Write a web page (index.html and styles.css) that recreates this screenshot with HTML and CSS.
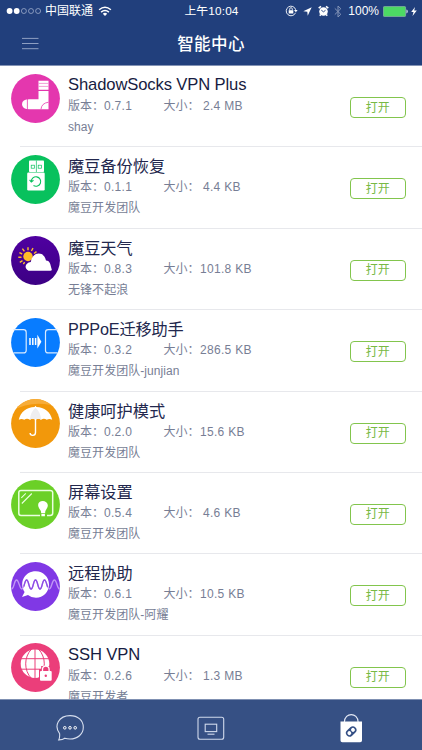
FILE: index.html
```html
<!DOCTYPE html>
<html lang="zh-CN">
<head>
<meta charset="utf-8">
<title>智能中心</title>
<link rel="stylesheet" href="styles.css">
</head>
<body>
<div class="screen">
  <header class="header">
    <div class="status">
      <div class="carrier">
        <svg class="signal" width="36" height="8" viewBox="0 0 36 8"><g fill="#fff"><circle cx="3.6" cy="4" r="2.9"/><circle cx="10.7" cy="4" r="2.9"/></g><g fill="none" stroke="#c3cde2" stroke-width=".6"><circle cx="17.9" cy="4" r="2.5"/><circle cx="25" cy="4" r="2.5"/><circle cx="32.1" cy="4" r="2.5"/></g></svg>
        <span>中国联通</span>
        <svg class="wifi" width="14" height="11" viewBox="0 0 14 11"><path d="M1.1 3.8Q7-1.2 12.9 3.8M3.1 6.1Q7 2.9 10.9 6.1" fill="none" stroke="#fff" stroke-width="1.5"/><path d="M4.8 7.7Q7 6 9.2 7.7L7 10z" fill="#fff"/></svg>
      </div>
      <div class="time">上午10:04</div>
      <div class="indicators">
        <svg width="13" height="12" viewBox="0 0 13 12"><path d="M10.5 7.8A4.8 4.8 0 1 1 10.7 4.8" fill="none" stroke="#fff" stroke-width=".9"/><path d="M9 5h3.6l-1.7 2.2z" fill="#fff"/><rect x="3.7" y="5.2" width="4.6" height="3.3" fill="#fff"/><path d="M4.7 5V4a1.3 1.3 0 0 1 2.6 0v1" fill="none" stroke="#fff" stroke-width=".8"/></svg>
        <svg class="arrow" width="9" height="9" viewBox="0 0 9 9"><path d="M8.7.3L.3 4.3l4 .4.4 4z" fill="#fff"/></svg>
        <svg class="alarm" width="11" height="12" viewBox="0 0 11 12"><circle cx="5.5" cy="6.5" r="4.3" fill="#fff"/><path d="M.7 3.2L3 1.3M10.3 3.2L8 1.3M2.7 9.5L1.8 10.700M8.3 9.5L9.200 10.700" stroke="#fff" stroke-width="1.5"/><path d="M3.3 5.2l2.2 1.6 2-1.5" fill="none" stroke="#213f7c" stroke-width=".9"/></svg>
        <svg class="bluetooth" width="8" height="13" viewBox="0 0 8 13"><path d="M.8 3.4l6 5.9L4 12V1l2.8 2.7-6 5.9" fill="none" stroke="#8495b8" stroke-width="1"/></svg>
        <span class="percent">100%</span>
        <svg class="battery" width="25" height="11" viewBox="0 0 25 11"><rect x=".4" y=".4" width="22.2" height="10.2" rx="1.2" fill="#4cd964" stroke="#91b7a9" stroke-width=".7"/><path d="M23.3 3.6q1.6.2 1.6 1.9t-1.6 1.9z" fill="#b9c5dc"/></svg>
        <svg class="bolt" width="6" height="9" viewBox="0 0 6 9"><path d="M4 0L.2 5h2.3L1.5 9l4.3-5.4H3.2z" fill="#fff"/></svg>
      </div>
    </div>
    <nav class="navbar">
      <svg class="menu" width="17" height="13" viewBox="0 0 17 13"><path d="M0 1.4h16.5M0 6.5h16.5M0 11.7h16.5" stroke="#8e9fc2" stroke-width="1"/></svg>
      <h1>智能中心</h1>
    </nav>
  </header>

  <main class="list">
    <article class="row">
      <svg class="icon" viewBox="0 0 49 49"><circle cx="24.5" cy="24.5" r="24.4" fill="#e437ae"/><path d="M27.5 6.8h10v9h-10zM27.5 17h10v18.2h-19q-7.5 0-7.5-5t7.5-5h9z" fill="#fff"/><path d="M27.5 9.4h10M27.5 12.4h10" stroke="#ef83ca" stroke-width=".8"/><path d="M16.4 25v10.3M30 35.2q.5-6 7.5-7" fill="none" stroke="#e437ae" stroke-width=".8"/></svg>
      <div class="info"><h2 class="latin">ShadowSocks VPN Plus</h2><div class="meta"><span>版本：</span><b>0.7.1</b><span>大小：</span><b class="short">2.4 MB</b></div><p>shay</p></div>
      <button>打开</button>
    </article>
    <article class="row">
      <svg class="icon" viewBox="0 0 49 49"><circle cx="24.5" cy="24.5" r="24.4" fill="#08c15d"/><rect x="18" y="5.5" width="15" height="11.5" rx=".8" fill="#fff"/><rect x="16.2" y="17.5" width="17.5" height="18" rx="1.2" fill="#fff"/><g fill="none" stroke="#08c15d" stroke-width=".7"><rect x="20.2" y="10.2" width="3.2" height="3"/><rect x="27.2" y="10.2" width="3.2" height="3"/><path d="M25.4 5.5V17"/></g><path d="M20.300 26.600A4.700 4.700 0 1 1 22.500 30.500M18.600 24.800l1.700 2.200 2.200-1.700" fill="none" stroke="#08c15d" stroke-width="1.1"/></svg>
      <div class="info"><h2>魔豆备份恢复</h2><div class="meta"><span>版本：</span><b>0.1.1</b><span>大小：</span><b class="short">4.4 KB</b></div><p>魔豆开发团队</p></div>
      <button>打开</button>
    </article>
    <article class="row">
      <svg class="icon" viewBox="0 0 49 49"><defs><linearGradient id="night" x2="0" y2="1"><stop stop-color="#4f00a0"/><stop offset="1" stop-color="#3c0084"/></linearGradient></defs><circle cx="24.5" cy="24.5" r="24.4" fill="url(#night)"/><circle cx="17" cy="20.5" r="4.7" fill="#ffbd27"/><path d="M17 14.3v-3M20.4 15l1.6-2.8M23 17.5l2.5-1.9M13.4 15.3l-2-2.7M11.2 18l-2.8-1.4M10.5 21.3H7.3M11.5 24.6l-2.7 1.7M13.6 26.1l-1.2 2" stroke="#ffbd27" stroke-width="1.4"/><path d="M17.5 34.7c-5.5-2.7-2.3-8.5 2.3-8.8 1.2-10.2 13.2-11.5 15.2-1.4 4.4.3 4.3 4.2 5.7 8.7q.5 1.5-1.4 1.5z" fill="#fff"/></svg>
      <div class="info"><h2>魔豆天气</h2><div class="meta"><span>版本：</span><b>0.8.3</b><span>大小：</span><b>101.8 KB</b></div><p>无锋不起浪</p></div>
      <button>打开</button>
    </article>
    <article class="row">
      <svg class="icon" viewBox="0 0 49 49"><circle cx="24.5" cy="24.5" r="24.4" fill="#087cff"/><g fill="none" stroke="#d8eaff" stroke-width="1.200"><path d="M2.5 11.7h10q2.7 0 2.7 2.7v18q0 2.5-2.7 2.5h-10M46.5 11.7h-9.3q-2.7 0-2.7 2.7v18q0 2.5 2.7 2.5h9.3"/></g><path d="M19 20v7M21.8 20v7M24.6 20v7" stroke="#fff" stroke-width="1.5"/><path d="M26.4 20v-3.2l4 6.9-4 6.8V27z" fill="#fff"/></svg>
      <div class="info"><h2 class="mixed">PPPoE迁移助手</h2><div class="meta"><span>版本：</span><b>0.3.2</b><span>大小：</span><b>286.5 KB</b></div><p>魔豆开发团队-junjian</p></div>
      <button>打开</button>
    </article>
    <article class="row">
      <svg class="icon" viewBox="0 0 49 49"><defs><clipPath id="disc"><circle cx="24.5" cy="24.5" r="24.4"/></clipPath></defs><circle cx="24.5" cy="24.5" r="24.4" fill="#f2980b"/><path clip-path="url(#disc)" d="M0 0h49v9q-24-10-49 3z" fill="#f7ad3a"/><path d="M7.8 20.7C9.3 12.8 16 8.2 23.5 8l1-1.2 1 1.2c7.5.2 14.2 4.8 15.7 12.7q-2.9-1.6-5.5 0-2.9-2-5.6.1-2.8-2-5.6 0-2.8-2-5.6 0-2.8-2.1-5.6-.1-2.7-1.6-5.5 0z" fill="#fff"/><path d="M18.9 20.7q.5-7.8 5.6-12 5.1 4.2 5.6 12-2.8-1.9-5.6 0-2.8-1.9-5.6 0z" fill="#eeeef0"/><path d="M24.5 20v13.6q0 2.8-2.7 2.8t-2.7-2.3" fill="none" stroke="#fff" stroke-width="1.4"/></svg>
      <div class="info"><h2>健康呵护模式</h2><div class="meta"><span>版本：</span><b>0.2.0</b><span>大小：</span><b>15.6 KB</b></div><p>魔豆开发团队</p></div>
      <button>打开</button>
    </article>
    <article class="row">
      <svg class="icon" viewBox="0 0 49 49"><circle cx="24.5" cy="24.5" r="24.4" fill="#6bd027"/><path d="M29 35.5H10q-2.2 0-2.2-2.2V12.6q0-2.2 2.2-2.2h29q2.7 0 2.7 2.2v20.7q0 2.2-2.7 2.2h-3" fill="none" stroke="#eaffdf" stroke-width="1.5"/><path d="M10.3 17.8l4.5-4.5M10.8 23.5l10-10" stroke="#eaffdf" stroke-width="1.1"/><path d="M30.2 33.2q0-2.7-2-4.8c-3.8-6.2 3.2-9.2 7-6.2 2.1 1.7 2 4.3.6 6.4q-1.6 2-1.7 4.6zM30.4 34h3.5v2.3h-3.5z" fill="#fff"/></svg>
      <div class="info"><h2>屏幕设置</h2><div class="meta"><span>版本：</span><b>0.5.4</b><span>大小：</span><b class="short">4.6 KB</b></div><p>魔豆开发团队</p></div>
      <button>打开</button>
    </article>
    <article class="row">
      <svg class="icon" viewBox="0 0 49 49"><circle cx="24.5" cy="24.5" r="24.4" fill="#8038e5"/><path d="M17 32.9l-6 2.1 2.6-5C7.5 20 14 9.2 24.8 9.2c7.5 0 13.2 6 13.2 13.2S32.2 35.8 25 35.8q-4.4 0-8-2.9z" fill="#fff"/><path d="M.7 27C3.5 26 3 18 5.5 18s3 9 5.3 9 2.6-9 4.8-9 2.3 9 4.5 9 2.2-9 4.4-9 2.3 9 4.5 9 2.3-9 4.5-9 2.5 9 4.8 9 2.7-9 5.1-9 2.5 8 5 9" fill="none" stroke="#c197f5" stroke-width="1.4"/><path d="M12.800 24.500c1-3 1.500-6.500 2.800-6.500 2.2 0 2.3 9 4.5 9s2.2-9 4.4-9 2.3 9 4.5 9 2.3-9 4.5-9c1.500 0 2 4 3.100 7" fill="none" stroke="#8d4ce4" stroke-width="1.3"/></svg>
      <div class="info"><h2>远程协助</h2><div class="meta"><span>版本：</span><b>0.6.1</b><span>大小：</span><b>10.5 KB</b></div><p>魔豆开发团队-阿耀</p></div>
      <button>打开</button>
    </article>
    <article class="row">
      <svg class="icon" viewBox="0 0 49 49"><circle cx="24.5" cy="24.5" r="24.4" fill="#eb3e7a"/><ellipse cx="24" cy="20.8" rx="14.3" ry="14.2" fill="#fff"/><g fill="none" stroke="#eb3e7a" stroke-width="1"><path d="M24 6v30M9 15.7h30M9 26.2h30M20.4 6.2c-7.6 8-7.6 21.3 0 29.2M27.6 6.2c7.6 8 7.6 21.3 0 29.2"/></g><path d="M28 26h2.2v-3h8.5v3H42v14H28z" fill="#eb3e7a"/><rect x="29" y="28" width="11.7" height="9.7" rx="1" fill="#fff"/><path d="M31.5 28v-1.6a3.3 3.3 0 0 1 6.6 0V28" fill="none" stroke="#fff" stroke-width="1.3"/><circle cx="34.8" cy="32.7" r="1.2" fill="#eb3e7a"/></svg>
      <div class="info"><h2 class="latin">SSH VPN</h2><div class="meta"><span>版本：</span><b>0.2.6</b><span>大小：</span><b class="short">1.3 MB</b></div><p>魔豆开发者</p></div>
      <button>打开</button>
    </article>
  </main>

  <footer class="tabs">
    <svg width="30" height="28" viewBox="0 0 30 28"><path d="M4.6 19.6C-1.5 11.5 4 1.6 15 1.6c8 0 13.3 5 13.3 11.7C28.3 20.2 22.5 25 15 25q-2.9 0-5.2-.8-2.4 1.8-6.1 1.7 1.3-2.4.9-6.3z" fill="none" stroke="#d7dfef" stroke-width="1.1"/><g fill="none" stroke="#fff" stroke-width="1"><circle cx="9.8" cy="13.8" r="1.3"/><circle cx="15" cy="13.8" r="1.3"/><circle cx="20.2" cy="13.8" r="1.3"/></g></svg>
    <svg width="30" height="28" viewBox="0 0 30 28"><g fill="none" stroke="#d0d9ec" stroke-width="1.1"><rect x="2" y="3.2" width="25.7" height="22" rx="2"/><rect x="9.2" y="10.2" width="11.5" height="7.4"/><path d="M11.5 20.2h7"/></g></svg>
    <svg width="30" height="30" viewBox="0 0 30 30"><path d="M7.4 9C7.7-.9 20.8-.9 21.1 9" fill="none" stroke="#e4e9f5" stroke-width="1.2"/><path d="M3.500 8.6h21.500v18.9q0 1.8-1.8 1.8H5.300q-1.800 0-1.800-1.800z" fill="#fff"/><g transform="rotate(-42 14.200 18.500)"><rect x="8.400" y="14.800" width="11.600" height="7.400" rx="3.700" fill="#344f85"/><rect x="9.900" y="16.500" width="3.700" height="3.900" rx="1.800" fill="#fff"/><rect x="14.800" y="16.500" width="3.700" height="3.900" rx="1.800" fill="#fff"/></g></svg>
  </footer>
</div>
</body>
</html>
```
FILE: styles.css
```css
* { box-sizing: border-box; }
body { margin: 0; font-family: "Liberation Sans", "Noto Sans CJK SC", sans-serif; }
h1, h2, p { margin: 0; font-weight: 400; }
svg { display: block; flex: none; }

.screen { width: 422px; height: 750px; display: flex; flex-direction: column; overflow: hidden; background: #fff; }

.header { flex: none; height: 66px; background: #213f7c; border-bottom: 1px solid #8393b5; color: #fff; }
.status { height: 22px; display: grid; grid-template-columns: 1fr auto 1fr; align-items: center; padding: 0 5px 0 6px; font-size: 12px; line-height: 22px; }
.carrier { display: flex; align-items: center; }
.carrier span { margin-left: 3px; }
.wifi { margin-left: 5px; }
.time { font-size: 11.800px; letter-spacing: .15px; }
.indicators { display: flex; align-items: center; justify-content: flex-end; }
.arrow { margin-left: 5px; }
.alarm { margin-left: 6px; }
.bluetooth { margin-left: 5px; }
.percent { margin-left: 6px; }
.battery { margin-left: 4px; }
.bolt { margin-left: 3px; }

.navbar { height: 43px; display: grid; grid-template-columns: 1fr auto 1fr; align-items: center; padding: 0 22px; }
.navbar h1 { font-size: 16.5px; line-height: 42px; font-weight: 500; letter-spacing: .4px; }

.list { flex: 1; min-height: 0; overflow: hidden; }
.row { height: 81.4px; display: grid; grid-template-columns: 49px 1fr 56px; column-gap: 8.5px; padding: 0 16px 0 10.5px; background: linear-gradient(#e7e8ec, #e7e8ec) 20px 100% / 100% 1px no-repeat; }
.icon { width: 49px; height: 49px; margin-top: 7.5px; }
.info { color: #777e95; }
.info h2 { margin-top: 8px; height: 22px; font-size: 16.2px; line-height: 22px; color: #22274d; white-space: nowrap; }
.info .latin { font-size: 16.6px; letter-spacing: -.12px; color: #171c42; }
.info .mixed { letter-spacing: -.15px; }
.meta { display: grid; grid-template-columns: 36px 59.5px 36.5px 1fr; height: 20px; font-size: 12px; line-height: 20px; white-space: nowrap; }
.meta b { font-weight: 400; letter-spacing: .3px; }
.meta .short { padding-left: 3px; }
.info p { height: 22px; font-size: 12px; line-height: 22px; letter-spacing: .05px; }

button { width: 55.5px; height: 21px; margin-top: 31px; padding: 0; border: 1.3px solid #82c54d; border-radius: 4px; background: #fff; color: #78b945; font: 400 12px/18px "Liberation Sans", "Noto Sans CJK SC", sans-serif; }

.tabs { flex: none; height: 51px; display: grid; grid-template-columns: repeat(3, 1fr); justify-items: center; align-items: center; background: #365084; border-top: 1px solid #7f90b2; padding-top: 6px; }
```
